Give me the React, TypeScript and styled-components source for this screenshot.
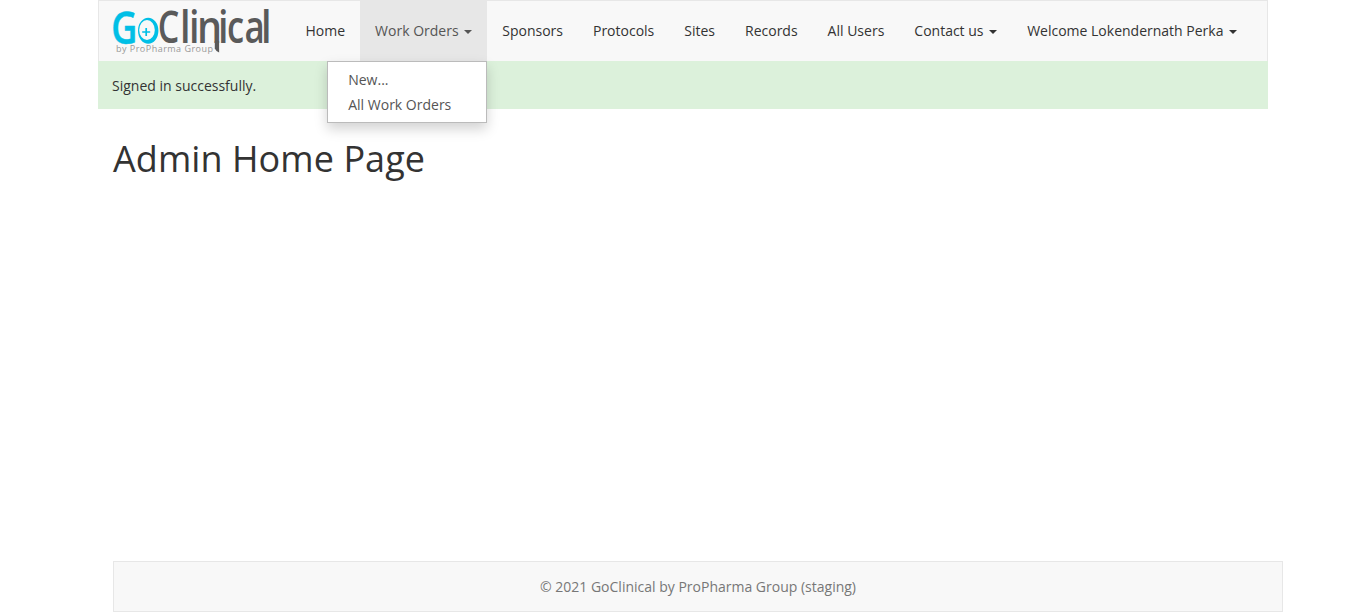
import React from "react";
import styled, { createGlobalStyle, css } from "styled-components";

const GlobalStyle = createGlobalStyle`
  *, *::before, *::after { box-sizing: border-box; }
  body {
    margin: 0;
    background: #fff;
    color: #333;
    font-family: "Open Sans", "Liberation Sans", sans-serif;
    font-size: 14px;
    line-height: 20px;
  }
`;

const Page = styled.div`
  display: flex;
  flex-direction: column;
  width: 1170px;
  height: 612px;
  margin: 0 auto;
`;

const Navbar = styled.nav`
  display: flex;
  height: 61px;
  background: #f8f8f8;
  border: 1px solid #e7e7e7;
  border-bottom: 0;
`;

const Brand = styled.a`
  width: 191.5px;
  padding: 5px 0 0 14px;
`;

const Menu = styled.ul`
  display: flex;
  margin: 0;
  padding: 0;
  list-style: none;
`;

const MenuItem = styled.li<{ $open?: boolean }>`
  position: relative;
  padding: 20px 15px;
  white-space: nowrap;
  ${(p) => p.$open && css`
    background: #e7e7e7;
    color: #555;
  `}
`;

const Caret = styled.b`
  display: inline-block;
  margin-left: 2px;
  vertical-align: middle;
  border-top: 4px solid currentColor;
  border-left: 4px solid transparent;
  border-right: 4px solid transparent;
`;

const Dropdown = styled.ul`
  position: absolute;
  z-index: 10;
  top: 100%;
  right: 0;
  width: 160px;
  height: 62px;
  margin: 0;
  padding: 5px 0;
  list-style: none;
  background: #fff;
  border: 1px solid #bbb;
  box-shadow: 0 6px 12px rgba(0, 0, 0, 0.175);
`;

const DropdownItem = styled.li`
  height: 25px;
  padding: 3px 20px 2px;
  color: #555;
`;

const Notice = styled.div`
  height: 48px;
  padding: 15px 14px 13px;
  background: #dcf1db;
`;

const Title = styled.h1`
  margin: 30px 15px 0;
  font-size: 36px;
  font-weight: 400;
  line-height: 40px;
  letter-spacing: 0.06px;
`;

const Footer = styled.footer`
  display: flex;
  align-items: center;
  justify-content: center;
  height: 51px;
  margin: auto -15px 0 15px;
  background: #f8f8f8;
  border: 1px solid #e7e7e7;
  color: #777;
`;

const LogoSvg = styled.svg`
  display: block;
  overflow: visible;
  font-family: "Open Sans", sans-serif;
`;

const Tagline = styled.text`
  font-family: "Open Sans", sans-serif;
  font-size: 9px;
  fill: #999;
`;

// Each letter of the wordmark has its own left edge and horizontal condensing.
const wordmark: [string, number, number][] = [
  ["C", 44.8, 0.74],
  ["l", 67, 0.82],
  ["i", 76, 0.82],
  ["n", 84, 0.86],
  ["i", 105, 0.82],
  ["c", 113.9, 0.75],
  ["a", 131.6, 0.76],
  ["l", 148, 0.82],
];

function Logo() {
  return (
    <LogoSvg width="158" height="50" viewBox="0 0 158 50">
      <text transform="translate(-1.7 37.5) scale(.8 1)" fontSize="45" fontWeight="600" fill="#00bfe6" stroke="#00bfe6" strokeWidth=".5">G</text>
      <path
        fill="#00bfe6"
        fillRule="evenodd"
        d="M25 24.7a10.2 13 0 1 0 20.4 0a10.2 13 0 1 0 -20.4 0zM26.2 24a7.8 10 0 1 0 15.6 0a7.8 10 0 1 0 -15.6 0z"
      />
      <path d="M33.2 22v8M29.2 26h8" stroke="#00bfe6" strokeWidth="1.7" />
      <g fill="#5a5a5a" fontSize="46" fontWeight="600">
        {wordmark.map(([letter, x, scale], i) => (
          <text key={i} transform={`translate(${x} 37) scale(${scale} 1)`}>{letter}</text>
        ))}
        <path d="M101.8 35h4.3v11.5q-3-1-4.3-4z" />
      </g>
      <Tagline x="3" y="46" textLength="97">by ProPharma Group</Tagline>
    </LogoSvg>
  );
}

const links = [
  { label: "Home" },
  { label: "Work Orders", menu: true, items: ["New...", "All Work Orders"] },
  { label: "Sponsors" },
  { label: "Protocols" },
  { label: "Sites" },
  { label: "Records" },
  { label: "All Users" },
  { label: "Contact us", menu: true },
  { label: "Welcome Lokendernath Perka", menu: true },
];

export default function App() {
  return (
    <>
      <GlobalStyle />
      <Page>
        <Navbar>
          <Brand><Logo /></Brand>
          <Menu>
            {links.map(({ label, menu, items }) => (
              <MenuItem key={label} $open={!!items}>
                {label}{menu && <> <Caret /></>}
                {items && (
                  <Dropdown>
                    {items.map((item) => <DropdownItem key={item}>{item}</DropdownItem>)}
                  </Dropdown>
                )}
              </MenuItem>
            ))}
          </Menu>
        </Navbar>
        <Notice>Signed in successfully.</Notice>
        <Title>Admin Home Page</Title>
        <Footer>© 2021 GoClinical by ProPharma Group (staging)</Footer>
      </Page>
    </>
  );
}
